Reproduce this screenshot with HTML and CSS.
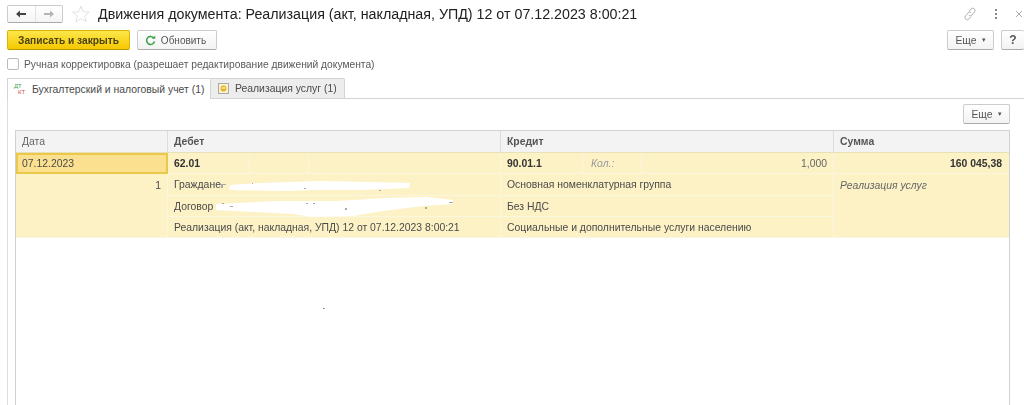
FILE: index.html
```html
<!DOCTYPE html>
<html lang="ru">
<head>
  <meta charset="UTF-8">
  <title>Движения документа</title>
  <link rel="stylesheet" href="styles.css">
</head>
<body>
  <div class="page">
    <div class="title-bar">
      <div class="nav">
        <span class="nav-btn">
          <svg width="12" height="10" viewBox="0 0 12 10"><path d="M1 5l4-3.500v2.400h6v2.200H5v2.400z" fill="#444"/></svg>
        </span>
        <span class="nav-btn">
          <svg width="12" height="10" viewBox="0 0 12 10"><path d="M11 5L7 1.500v2.400H1v2.200h6v2.400z" fill="#b4b4b4"/></svg>
        </span>
      </div>
      <svg class="star" width="18" height="18" viewBox="0 0 18 18"><path d="M9 1l2.200 5.800 6.200.3-4.900 3.900 1.700 6L9 13.600 3.800 17l1.700-6L.6 7.100l6.200-.3z" fill="none" stroke="#e2e2e2"/></svg>
      <h1 class="title">Движения документа: Реализация (акт, накладная, УПД) 12 от 07.12.2023 8:00:21</h1>
      <div class="window-icons">
        <svg width="14" height="14" viewBox="0 0 14 14"><path d="M6 4.500l2-2.500a2.300 2.300 0 0 1 3.500 3L9 8a2.300 2.300 0 0 1-3 .4M8 9.500L6 12a2.300 2.300 0 0 1-3.500-3L5 6a2.300 2.300 0 0 1 3-.4" fill="none" stroke="#aaa" stroke-width="0.900"/></svg>
        <svg width="4" height="10" viewBox="0 0 4 10"><path d="M1 0h2v2H1zM1 4h2v2H1zM1 8h2v2H1z" fill="#888"/></svg>
        <svg width="8" height="8" viewBox="0 0 8 8"><path d="M1 1l6 6M7 1L1 7" stroke="#aaa"/></svg>
      </div>
    </div>

    <div class="toolbar">
      <button class="btn btn-primary">Записать и закрыть</button>
      <button class="btn btn-refresh">
        <svg width="11" height="11" viewBox="0 0 12 12"><path d="M9.800 3.500A4.400 4.400 0 1 0 10.400 7" fill="none" stroke="#3fa34d" stroke-width="1.700"/><path d="M7.500 4.200h3.700V.600z" fill="#3fa34d"/></svg>
        Обновить
      </button>
      <div class="spacer"></div>
      <button class="btn btn-more">Еще <span class="caret">▾</span></button>
      <button class="btn btn-help">?</button>
    </div>

    <label class="check-row">
      <span class="checkbox"></span>
      Ручная корректировка (разрешает редактирование движений документа)
    </label>

    <div class="tabs">
      <div class="tab tab-active">
        <span class="dtkt"><span class="dt">ДТ</span><span class="kt">КТ</span></span>
        Бухгалтерский и налоговый учет (1)
      </div>
      <div class="tab">
        <svg width="11" height="11" viewBox="0 0 11 11"><rect x=".5" y=".5" width="10" height="10" fill="#fbf3cf" stroke="#aaa"/><circle cx="5.500" cy="5.500" r="3" fill="#e6b422"/><path d="M3.500 5h4" stroke="#fff"/></svg>
        Реализация услуг (1)
      </div>
    </div>

    <div class="panel">
      <div class="panel-bar">
        <button class="btn btn-more">Еще <span class="caret">▾</span></button>
      </div>

      <div class="grid">
        <div class="head">Дата</div>
        <div class="head head-bold">Дебет</div>
        <div class="head head-bold">Кредит</div>
        <div class="head head-bold">Сумма</div>

        <div class="cell cell-selected">07.12.2023</div>
        <div class="cell split">
          <b class="sub-a">62.01</b><span class="sub-b"></span><span class="sub-c"></span>
        </div>
        <div class="cell split">
          <b class="sub-a">90.01.1</b><i class="sub-b muted">Кол.:</i><span class="sub-c qty">1,000</span>
        </div>
        <div class="cell cell-right"><b>160 045,38</b></div>

        <div class="cell cell-num">1</div>
        <div class="cell">Граждане</div>
        <div class="cell">Основная номенклатурная группа</div>
        <div class="cell cell-note"><i>Реализация услуг</i></div>

        <div class="cell">Договор</div>
        <div class="cell">Без НДС</div>

        <div class="cell">Реализация (акт, накладная, УПД) 12 от 07.12.2023 8:00:21</div>
        <div class="cell">Социальные и дополнительные услуги населению</div>
      </div>
    </div>

    <!-- замазанные данные контрагента -->
    <svg class="redact" width="1024" height="405" viewBox="0 0 1024 405">
      <path d="M230 185l30-2 60-2 50 1 40 1-1 5-45 2-50 0-25 1-60-1z" fill="#fff"/>
      <path d="M216 204l60-3 60 0 50-3 40-1 27 3 0 4-30 2-40 5-30 5-40 1-20-3-40-2-37-2z" fill="#fff"/>
      <path d="M221 184h5v1h-3v3h-2zM252 183h1v1h-1zM304 188h2v1h-2zM379 190h2v1h-2zM222 203h2v1h-2zM230 206h3v1h-3zM306 203h2v1h-2zM313 203h2v1h-2zM345 208h2v2h-2zM425 207h2v2h-2zM449 202h4v1h-4z" fill="#aaa"/>
      <rect x="323" y="308" width="1.500" height="1" fill="#777"/>
    </svg>
  </div>
</body>
</html>
```

FILE: styles.css
```css
* {
  box-sizing: border-box;
}

html, body {
  margin: 0;
  background: #fff;
}

body {
  font-family: 'Liberation Sans', Arial, sans-serif;
  font-size: 10.4px;
  color: #4a4a4a;
}

.page {
  position: relative;
  display: flex;
  flex-direction: column;
  width: 1024px;
  height: 405px;
  overflow: hidden;
  filter: blur(0.3px);
}

.title-bar {
  display: flex;
  align-items: center;
  height: 18px;
  margin: 5px 0 0 7px;
}

.nav {
  display: flex;
  width: 56px;
  height: 18px;
  border: 1px solid #ccc;
  border-bottom-color: #aaa;
  border-radius: 2px;
  background: linear-gradient(#fff, #f4f4f4);
}

.nav-btn {
  display: flex;
  flex: 1;
  align-items: center;
  justify-content: center;
}

.nav-btn + .nav-btn {
  border-left: 1px solid #e2e2e2;
}

.star {
  margin: 0 8px 0 9px;
}

.title {
  margin: 0;
  font-size: 14.25px;
  font-weight: normal;
  color: #222;
  white-space: nowrap;
}

.window-icons {
  display: flex;
  align-items: center;
  gap: 17px;
  margin-left: auto;
  margin-right: 1px;
}

.toolbar {
  display: flex;
  gap: 7px;
  margin: 7px 0 0 7px;
}

.spacer {
  flex: 1;
}

.btn {
  display: flex;
  align-items: center;
  justify-content: center;
  gap: 5px;
  height: 20px;
  padding: 0;
  border: 1px solid #ccc;
  border-bottom-color: #aaa;
  border-radius: 2px;
  background: linear-gradient(#fff, #f3f3f3);
  font: inherit;
  color: #555;
  white-space: nowrap;
}

.btn svg {
  flex-shrink: 0;
}

.btn-primary {
  width: 123px;
  border-color: #d9b400;
  border-bottom-color: #b89a00;
  background: linear-gradient(#fde74c, #f5c800);
  font-size: 10.2px;
  font-weight: bold;
  color: #4a4214;
}

.btn-refresh {
  width: 80px;
  padding-right: 3px;
  font-size: 10px;
}

.btn-more {
  width: 47px;
}

.btn-help {
  width: 23px;
  font-size: 12px;
  font-weight: bold;
  border-right: none;
}

.caret {
  font-size: 7px;
}

.check-row {
  display: flex;
  align-items: center;
  gap: 5px;
  height: 12px;
  margin: 8px 0 0 7px;
  font-size: 10.25px;
  color: #5a5a5a;
}

.checkbox {
  width: 12px;
  height: 12px;
  border: 1px solid #bbb;
  border-radius: 2px;
  background: #fff;
}

.tabs {
  display: flex;
  height: 21px;
  margin: 8px 0 0 7px;
}

.tab {
  display: flex;
  align-items: center;
  gap: 6px;
  width: 134px;
  height: 21px;
  padding-left: 7px;
  border: 1px solid #d4d4d4;
  border-left: none;
  border-radius: 0 2px 0 0;
  background: #ededed;
  white-space: nowrap;
}

.tab-active {
  position: relative;
  z-index: 1;
  gap: 5px;
  width: 204px;
  padding-left: 6px;
  border-left: 1px solid #d4d4d4;
  border-bottom: none;
  background: #fff;
}

.dtkt {
  display: flex;
  flex-direction: column;
  flex-shrink: 0;
  width: 13px;
  font-size: 6px;
  line-height: 6px;
}

.dt {
  color: #3fa34d;
}

.kt {
  margin-left: 4px;
  color: #d04848;
}

.panel {
  display: flex;
  flex: 1;
  flex-direction: column;
  margin: -1px 0 0 7px;
  padding: 0 14px 0 7px;
  border-top: 1px solid #d4d4d4;
  border-left: 1px solid #ddd;
}

.panel-bar {
  display: flex;
  justify-content: flex-end;
  margin: 5px 0 6px;
}

.grid {
  display: grid;
  flex: 1;
  grid-template-columns: 152px 333px 333px 175px;
  grid-template-rows: 22px 21px 22px 21px 21px 1fr;
  border: 1px solid #d2d2d2;
  border-bottom: none;
}

.head {
  display: flex;
  align-items: center;
  padding: 0 6px 1px;
  border-right: 1px solid #dcdcdc;
  border-bottom: 1px solid #e8e0b8;
  background: #f3f3f3;
  color: #666;
}

.head:nth-child(4) {
  border-right: none;
}

.head-bold {
  font-weight: bold;
  color: #555;
}

.cell {
  display: flex;
  align-items: center;
  min-width: 0;
  padding: 0 6px;
  border-right: 1px solid #fbf6de;
  border-bottom: 1px solid #fbf6de;
  background: #fdf2c6;
  white-space: nowrap;
}

.cell-selected {
  padding-left: 4px;
  border: 2px solid #eac84a;
  background: #fbe18f;
}

.cell-right {
  justify-content: flex-end;
  padding-right: 7px;
  border-right: none;
  color: #333;
}

.cell-num {
  grid-row: span 3;
  align-items: flex-start;
  justify-content: flex-end;
  padding-top: 6px;
  padding-right: 6px;
}

.cell-note {
  grid-row: span 3;
  align-items: flex-start;
  padding-top: 6px;
  border-right: none;
  color: #666;
}

.split {
  padding: 0;
  color: #333;
}

.split > * {
  display: flex;
  align-items: center;
  height: 100%;
}

.sub-a {
  width: 82px;
  padding-left: 6px;
  border-right: 1px solid #fbf6de;
}

.sub-b {
  width: 59px;
  padding-left: 8px;
  border-right: 1px solid #fbf6de;
}

.sub-c {
  flex: 1;
}

.qty {
  justify-content: flex-end;
  padding-right: 6px;
  color: #666;
}

.muted {
  color: #999;
}

.redact {
  position: absolute;
  top: 0;
  left: 0;
  pointer-events: none;
}
```
